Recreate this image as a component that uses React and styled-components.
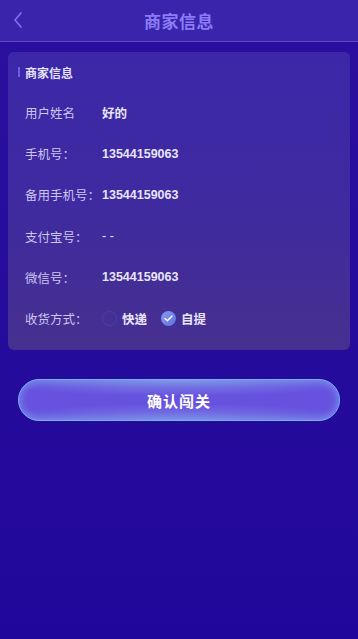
import React, { useState } from "react";
import styled, { createGlobalStyle } from "styled-components";

const Global = createGlobalStyle`
  html, body { margin: 0; padding: 0; }
  body {
    font-family: "Liberation Sans", "Noto Sans CJK SC", sans-serif;
    background: #22079b;
  }
  #root { min-height: 639px; }
`;

const Page = styled.div`
  min-height: 639px;
  background: linear-gradient(180deg, #2b10a0 0%, #260c9c 50%, #21069b 100%);
  display: flex;
  flex-direction: column;
`;

const Header = styled.header`
  height: 41px;
  background: #3a24ab;
  border-bottom: 1px solid #5a4bc2;
  display: flex;
  align-items: center;
  justify-content: center;
  position: relative;
`;

const Back = styled.button`
  position: absolute;
  left: 8px;
  top: 10px;
  width: 20px;
  height: 20px;
  background: none;
  border: 0;
  padding: 0;
  display: flex;
  align-items: center;
  justify-content: center;
`;

const Title = styled.h1`
  margin: 0;
  font-size: 17px;
  font-weight: 700;
  color: #8b7cf6;
  letter-spacing: 0.5px;
`;

const Card = styled.section`
  margin: 10px 8px 0;
  border-radius: 6px;
  background: linear-gradient(180deg, #3c27a8 0%, #3f2aa0 50%, #46308f 100%);
  padding: 12px 0 11px;
`;

const CardTitle = styled.div`
  display: flex;
  align-items: center;
  gap: 5px;
  padding-left: 10px;
  font-size: 12px;
  font-weight: 700;
  color: #e6e2fb;
  height: 16px;
  &::before {
    content: "";
    width: 2px;
    height: 10px;
    background: #6a5ae8;
  }
`;

const Rows = styled.div`
  display: flex;
  flex-direction: column;
  margin-top: 12px;
`;

const Row = styled.div`
  display: flex;
  align-items: center;
  height: 41.2px;
  padding-left: 17px;
  font-size: 12.5px;
`;

const Label = styled.span`
  width: 77px;
  color: #ccc6f0;
  white-space: nowrap;
`;

const Value = styled.span`
  color: #e8e5fb;
  font-weight: ${(p) => (p.$plain ? 400 : 700)};
`;

const Options = styled.div`
  display: flex;
  align-items: center;
  gap: 14px;
`;

const Option = styled.label`
  display: flex;
  align-items: center;
  gap: 5px;
  color: #e8e5fb;
  font-weight: 700;
  font-size: 12.5px;
  cursor: pointer;
`;

const Radio = styled.span`
  width: 15px;
  height: 15px;
  border-radius: 50%;
  box-sizing: border-box;
  display: flex;
  align-items: center;
  justify-content: center;
  border: ${(p) => (p.$checked ? "none" : "1px solid #4d3cb8")};
  background: ${(p) =>
    p.$checked ? "linear-gradient(135deg, #8a9cf2 0%, #5d6fe0 100%)" : "transparent"};
`;

const ButtonWrap = styled.div`
  padding: 29px 18px 0;
`;

const Confirm = styled.button`
  width: 100%;
  height: 42px;
  border-radius: 21px;
  border: 1.5px solid #7ab0f2;
  background:
    radial-gradient(ellipse 60% 40% at 50% 0%, rgba(140, 175, 230, 0.6), rgba(140, 175, 230, 0) 100%),
    radial-gradient(ellipse 60% 40% at 50% 100%, rgba(140, 175, 230, 0.5), rgba(140, 175, 230, 0) 100%),
    #6752e0;
  box-shadow: inset 0 0 8px rgba(130, 180, 245, 0.75);
  color: #ffffff;
  font-family: "Liberation Sans", "Noto Sans CJK SC", sans-serif;
  font-size: 15px;
  font-weight: 700;
  letter-spacing: 1px;
`;

const rows = [
  { label: "用户姓名", value: "好的" },
  { label: "手机号：", value: "13544159063" },
  { label: "备用手机号：", value: "13544159063" },
  { label: "支付宝号：", value: "- -", plain: true },
  { label: "微信号：", value: "13544159063" },
];

const Check = () => (
  <svg width="9" height="7" viewBox="0 0 9 7">
    <path d="M1 3.5l2.4 2.3L8 1" stroke="#fff" strokeWidth="1.4" fill="none" strokeLinecap="round" strokeLinejoin="round" />
  </svg>
);

export default function App() {
  const [mode, setMode] = useState("pickup");
  return (
    <>
      <Global />
      <Page>
        <Header>
          <Back aria-label="back">
            <svg width="12" height="18" viewBox="0 0 12 18" fill="none">
              <path d="M9 2L3 9l6 7" stroke="#7a6cf0" strokeWidth="1.8" strokeLinecap="round" strokeLinejoin="round" />
            </svg>
          </Back>
          <Title>商家信息</Title>
        </Header>
        <Card>
          <CardTitle>商家信息</CardTitle>
          <Rows>
            {rows.map((r) => (
              <Row key={r.label}>
                <Label>{r.label}</Label>
                <Value $plain={r.plain}>{r.value}</Value>
              </Row>
            ))}
            <Row>
              <Label>收货方式：</Label>
              <Options>
                <Option onClick={() => setMode("express")}>
                  <Radio $checked={mode === "express"}>{mode === "express" && <Check />}</Radio>
                  快递
                </Option>
                <Option onClick={() => setMode("pickup")}>
                  <Radio $checked={mode === "pickup"}>{mode === "pickup" && <Check />}</Radio>
                  自提
                </Option>
              </Options>
            </Row>
          </Rows>
        </Card>
        <ButtonWrap>
          <Confirm>确认闯关</Confirm>
        </ButtonWrap>
      </Page>
    </>
  );
}
